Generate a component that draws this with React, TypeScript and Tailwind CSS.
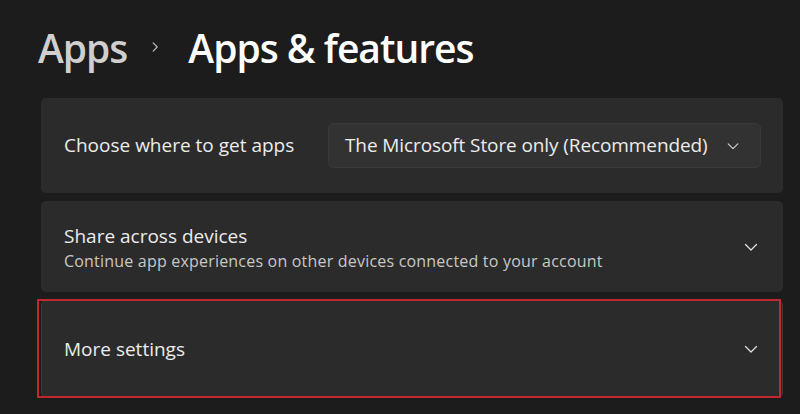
import React from "react";

function ChevronDown({ className }: { className?: string }) {
  return (
    <svg viewBox="0 0 16 16" className={className} fill="none">
      <path d="M2.5 5.5 8 11l5.5-5.5" stroke="currentColor" strokeWidth="1.3" strokeLinecap="round" strokeLinejoin="round" />
    </svg>
  );
}

function ChevronRight({ className }: { className?: string }) {
  return (
    <svg viewBox="0 0 16 16" className={className} fill="none">
      <path d="M5.5 2.5 11 8l-5.5 5.5" stroke="currentColor" strokeWidth="1.6" strokeLinecap="round" strokeLinejoin="round" />
    </svg>
  );
}

export default function App() {
  return (
    <div className="w-[800px] h-[414px] overflow-hidden bg-[#1c1c1c] font-['Open_Sans','Noto_Sans',sans-serif] text-white">
      {/* Breadcrumb header */}
      <div className="flex items-center h-[98px] pl-[38px] pb-[4px]">
        <span className="text-[39px] leading-none font-semibold text-[#cfcfcf] tracking-[-1px]">Apps</span>
        <ChevronRight className="w-[12px] h-[12px] ml-[22px] mr-[27px] text-[#bdbdbd]" />
        <span className="text-[39px] leading-none font-semibold text-white tracking-[-1px]">Apps &amp; features</span>
      </div>

      <div className="flex flex-col gap-[8px] pl-[41px] pr-[17px]">
        {/* Choose where to get apps */}
        <div className="flex items-center justify-between h-[95px] rounded-[5px] bg-[#2b2b2b] pl-[23px] pr-[22px]">
          <span className="text-[19px] text-[#ececec]">Choose where to get apps</span>
          <div className="flex items-center h-[45px] w-[433px] rounded-[5px] bg-[#323232] border border-[#393939] pl-[16px] pr-[20px]">
            <span className="flex-1 text-[19px] tracking-[-0.1px] text-[#ececec]">The Microsoft Store only (Recommended)</span>
            <ChevronDown className="w-[14px] h-[14px] text-[#d0d0d0]" />
          </div>
        </div>

        {/* Share across devices */}
        <div className="flex items-center justify-between h-[91px] rounded-[5px] bg-[#2b2b2b] pl-[23px] pr-[24px]">
          <div className="flex flex-col pt-[3px]">
            <span className="text-[19px] leading-[25px] text-[#ececec]">Share across devices</span>
            <span className="text-[16px] leading-[24px] tracking-[0.2px] text-[#c8c8c8]">Continue app experiences on other devices connected to your account</span>
          </div>
          <ChevronDown className="w-[16px] h-[16px] text-[#e0e0e0]" />
        </div>

        {/* More settings */}
        <div className="relative flex items-center justify-between h-[98px] rounded-[5px] bg-[#2b2b2b] border border-[#3a3a3a] pl-[22px] pr-[23px]">
          <span className="text-[19px] text-[#ececec]">More settings</span>
          <ChevronDown className="w-[16px] h-[16px] text-[#e0e0e0]" />
          <div className="absolute -left-[5px] -top-[2px] right-[1px] -bottom-[1px] border-2 border-[#c2262e]" />
        </div>
      </div>
    </div>
  );
}
